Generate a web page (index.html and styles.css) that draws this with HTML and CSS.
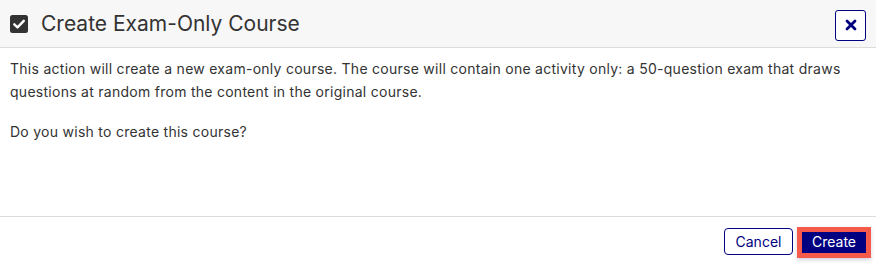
FILE: index.html
```html
<!DOCTYPE html>
<html lang="en">
<head>
<meta charset="utf-8">
<title>Create Exam-Only Course</title>
<link rel="stylesheet" href="styles.css">
</head>
<body>
<div class="modal">
  <header class="modal-header">
    <div class="title-wrap">
      <svg class="check-icon" width="18" height="18" viewBox="0 0 18 18" aria-hidden="true">
        <rect x="0" y="0" width="18" height="18" rx="2.5" fill="#333333"/>
        <path d="M4.3 9.3 L7.5 12.4 L13.8 5.8" fill="none" stroke="#ffffff" stroke-width="2.4" stroke-linecap="round" stroke-linejoin="round"/>
      </svg>
      <h1 class="title">Create Exam-Only Course</h1>
    </div>
    <button class="close-btn" aria-label="Close">
      <svg width="12" height="12" viewBox="0 0 12 12" aria-hidden="true">
        <path d="M2 2 L10 10 M10 2 L2 10" stroke="#000080" stroke-width="2.8" stroke-linecap="round"/>
      </svg>
    </button>
  </header>
  <main class="modal-body">
    <p>This action will create a new exam-only course. The course will contain one activity only: a 50-question exam that draws questions at random from the content in the original course.</p>
    <p>Do you wish to create this course?</p>
  </main>
  <footer class="modal-footer">
    <button class="btn btn-outline">Cancel</button>
    <button class="btn btn-primary">Create</button>
  </footer>
</div>
</body>
</html>
```
FILE: styles.css
```css
html, body {
  margin: 0;
  padding: 0;
  background: #ffffff;
}
body {
  font-family: Inter, "Liberation Sans", Arial, sans-serif;
  color: #333333;
}
.modal {
  width: 876px;
  height: 266px;
  display: flex;
  flex-direction: column;
}
.modal-header {
  height: 47px;
  background: #f7f7f7;
  border-bottom: 1px solid #dcdcdc;
  box-sizing: content-box;
  display: flex;
  align-items: center;
  justify-content: space-between;
  padding: 0 10px;
}
.title-wrap {
  display: flex;
  align-items: center;
  gap: 13px;
}
.check-icon {
  display: block;
  margin-top: 1px;
}
.title {
  margin: 0;
  font-size: 21px;
  font-weight: 400;
  color: #333333;
  letter-spacing: 0;
}
.close-btn {
  width: 31px;
  height: 31px;
  box-sizing: border-box;
  border: 1px solid #000080;
  border-radius: 3px;
  background: #ffffff;
  display: flex;
  align-items: center;
  justify-content: center;
  padding: 0;
  margin-top: 3px;
}
.close-btn svg {
  display: block;
}
.modal-body {
  flex: 1;
  padding: 9px 10px 0 10px;
  font-size: 14px;
  line-height: 23px;
  letter-spacing: 0.27px;
  color: #333333;
}
.modal-body p {
  margin: 0 0 17px 0;
}
.modal-footer {
  height: 49px;
  border-top: 1px solid #dcdcdc;
  display: flex;
  justify-content: flex-end;
  align-items: center;
  gap: 4px;
  padding: 0 5px 0 0;
}
.btn {
  font-family: Inter, "Liberation Sans", Arial, sans-serif;
  font-size: 14px;
  line-height: 1;
  cursor: pointer;
  box-sizing: border-box;
}
.btn-outline {
  width: 69px;
  height: 27px;
  border: 1px solid #000080;
  border-radius: 4px;
  background: #ffffff;
  color: #000080;
  padding: 0;
}
.btn-primary {
  width: 74px;
  height: 31px;
  border: 5px solid #f65a4b;
  border-radius: 0;
  background: #000080;
  color: #ffffff;
  padding: 0 0 1px 0;
  margin-top: 2px;
  box-shadow: 0 2px 4px rgba(0, 0, 80, 0.18);
}
```
